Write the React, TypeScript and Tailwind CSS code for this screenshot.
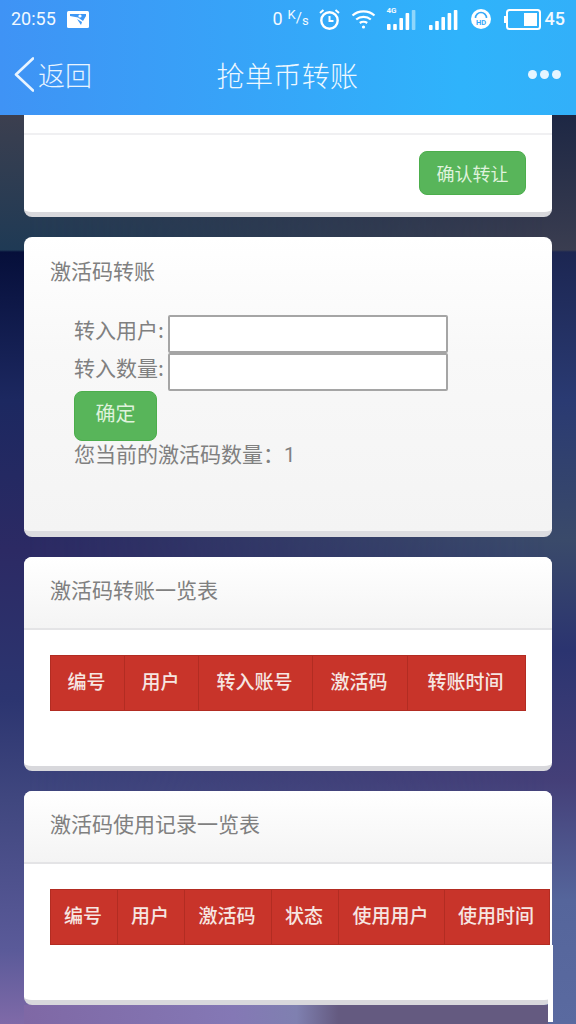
const cjk = 'font-["Noto_Sans_CJK_SC","Noto_Sans",sans-serif]';

function Signal({ bars, className }: { bars: number[]; className?: string }) {
  return (
    <svg width="30" height="22" viewBox="0 0 30 22" className={className}>
      {bars.map((h, i) => (
        <rect key={i} x={i * 6.2} y={22 - h} width="3.6" height={h} rx="0.8" fill={i === bars.length - 1 && bars[0] === 6 ? '#8fd6fb' : 'white'} />
      ))}
    </svg>
  );
}

function StatusBar() {
  return (
    <div className="flex h-9 items-center justify-between pl-[11px] pr-[11px] pt-0.5 font-['Roboto',sans-serif] text-[#f2f9ff]">
      <div className="flex items-center gap-[11px]">
        <span className="text-[18px] leading-none">20:55</span>
        <svg width="22" height="17" viewBox="0 0 22 17">
          <rect width="22" height="17" rx="1.5" fill="white" />
          <path d="M3 3h16v2l-3 5-5-3.5-8-1.5z" fill="#3f98f5" />
          <path d="M10 8l5 3-1 3z" fill="#3f98f5" />
          <circle cx="13" cy="5" r="1.6" fill="white" />
        </svg>
      </div>
      <div className="flex items-center">
        <span className="text-[18px] leading-none">0</span>
        <span className="ml-[5px] flex w-5 items-start text-[13px] leading-none">
          <span className="-mt-[3px]">K</span>
          <span className="text-[15px]">/</span>
          <span className="mt-[3px]">s</span>
        </span>
        <svg width="23" height="23" viewBox="0 0 23 23" fill="none" stroke="white" className="ml-[10px]">
          <circle cx="11.5" cy="12.5" r="8.2" strokeWidth="2.4" />
          <path d="M11.5 8v5h4" strokeWidth="2" />
          <path d="M2 5l3.5-3M21 5l-3.5-3" strokeWidth="2" />
        </svg>
        <svg width="25" height="20" viewBox="0 0 25 20" fill="none" stroke="white" strokeWidth="2.2" className="ml-[10px]">
          <path d="M1.5 6.5c6-5.5 16-5.5 22 0" />
          <path d="M5.2 10.5c4-3.5 10.6-3.5 14.6 0" />
          <path d="M8.8 14c2-1.5 5.4-1.5 7.4 0" />
          <circle cx="12.5" cy="18" r="1.6" fill="white" stroke="none" />
        </svg>
        <div className="relative ml-[11px] h-[22px] w-[30px]">
          <span className="absolute -top-[1px] left-0 text-[8px] leading-none font-bold">4G</span>
          <Signal bars={[6, 6, 12, 17, 20]} />
        </div>
        <Signal bars={[5, 9, 13, 17, 20]} className="ml-3" />
        <svg width="20" height="20" viewBox="0 0 20 20" className="ml-3">
          <circle cx="10" cy="10" r="10" fill="white" />
          <path d="M4.5 9a5.5 5.5 0 0 1 11 0" fill="none" stroke="#35a8f8" strokeWidth="1.6" />
          <text x="10" y="15.5" textAnchor="middle" fontSize="7.5" fontWeight="700" fill="#35a8f8">HD</text>
        </svg>
        <svg width="38" height="21" viewBox="0 0 38 21" fill="none" className="ml-[13px]">
          <rect x="3" y="1" width="33" height="19" rx="2.5" stroke="white" strokeWidth="2" />
          <rect x="0" y="7" width="2" height="7" fill="white" />
          <rect x="20" y="4" width="13" height="13" fill="white" />
        </svg>
        <span className="ml-[3px] text-[18px] leading-none font-medium">45</span>
      </div>
    </div>
  );
}

function Header() {
  return (
    <header className="relative z-10 flex h-[115px] shrink-0 flex-col bg-[linear-gradient(90deg,#3f93f5,#2fb3fb_80%,#32b0f9)] text-white">
      <StatusBar />
      <div className={`grid flex-1 grid-cols-[1fr_auto_1fr] items-center pb-[2px] pl-[14px] pr-[15px] ${cjk}`}>
        <div className="flex items-center gap-1">
          <svg width="20" height="35" viewBox="0 0 20 35" fill="none" stroke="#e8f4ff" strokeWidth="2.6" strokeLinecap="round" strokeLinejoin="round">
            <path d="M19 1.5L2 17.5 19 33.5" />
          </svg>
          <span className="text-[27px] leading-none font-light text-[#e8f4ff]">返回</span>
        </div>
        <h1 className="text-[28px] leading-none font-light tracking-[0.4px] text-[#eef8ff]">抢单币转账</h1>
        <div className="flex justify-end gap-[3px]">
          <i className="size-[9px] rounded-full bg-[#e6f5ff]" />
          <i className="size-[9px] rounded-full bg-[#e6f5ff]" />
          <i className="size-[9px] rounded-full bg-[#e6f5ff]" />
        </div>
      </div>
    </header>
  );
}

function Field({ label }: { label: string }) {
  return (
    <div className="flex h-[38px] items-center">
      <label className="w-[94px] pb-[10px] text-[21px] leading-none whitespace-nowrap text-[#808080]">{label}:</label>
      <input className="h-[38px] w-[280px] rounded-[2px] border-2 border-[#a5a5a5] bg-white" />
    </div>
  );
}

function TableCard({ title, cols, tableWidth, height }: { title: string; cols: { name: string; w: string }[]; tableWidth: string; height: string }) {
  return (
    <section className={`overflow-hidden rounded-lg border-b-[5px] border-[#d8d8dc] bg-white ${height}`}>
      <div className="flex h-[73px] items-center border-b-2 border-[#e4e4e6] bg-[linear-gradient(#ffffff,#f4f4f4)] pb-[5px] pl-[26px] text-[21px] text-[#808080]">
        {title}
      </div>
      <div className="pl-[26px] pt-[25px]">
        <table className={`table-fixed border-collapse ${tableWidth}`}>
          <tbody>
            <tr className="h-[55px] bg-[#c8342a] text-center text-[19px] font-medium text-[#f6e6e2]">
              {cols.map((c) => (
                <td key={c.name} className={`border border-[#b22c22] p-0 pb-1 pr-[2px] ${c.w}`}>{c.name}</td>
              ))}
            </tr>
          </tbody>
        </table>
      </div>
    </section>
  );
}

export default function App() {
  return (
    <div className={`relative flex h-[1024px] w-[576px] flex-col overflow-hidden bg-[linear-gradient(#3c3f4f_115px,#1f3a55_250px,#060f3a_252px,#1c2860_400px,#2c2a64_550px,#2c3570_700px,#40477f_800px,#5a5a99_950px,#7f6aa8_1024px)] ${cjk}`}>
      {/* wallpaper */}
      <div className="absolute inset-0 bg-[linear-gradient(#1d2744_115px,#3a3d50_250px,#1c2652_252px,#2a3a72_400px,#3a4a6a_540px,#2b3470_650px,#443f78_780px,#55659b_900px,#5a6aa0_1024px)] [mask-image:linear-gradient(to_right,transparent_5%,black_95%)]" />
      <div className="absolute bottom-0 left-6 right-[28px] h-[19px] bg-[linear-gradient(90deg,#7f68a5,#8478b5_40%,#7f80b0_52%,#645a80_60%)]" />

      <Header />

      <main className="relative flex flex-col gap-5 px-6">
        <section className="h-[102px] rounded-b-lg border-b-[5px] border-[#d8d8dc] bg-white">
          <div className="h-[20px] border-b-2 border-[#f0f0f2]" />
          <div className="flex justify-end pr-[26px] pt-4">
            <button className="h-[44px] w-[107px] rounded-lg border border-[#4cae4c] bg-[#58b55a] text-[18px] text-[#dff2dc]">确认转让</button>
          </div>
        </section>

        <section className="h-[300px] rounded-lg border-b-[6px] border-[#dcdce0] bg-[linear-gradient(#ffffff,#f8f8f8_40%,#f4f4f4)]">
          <h2 className="pl-[26px] pt-[18px] text-[21px] leading-[30px] text-[#808080]">激活码转账</h2>
          <div className="pl-[50px] pt-[30px]">
            <Field label="转入用户" />
            <Field label="转入数量" />
            <button className="block h-[50px] w-[83px] rounded-lg border border-[#4cae4c] bg-[#58b55a] pb-[7px] text-[20px] text-[#dff2dc]">确定</button>
            <p className="-mt-[2px] text-[21px] leading-[28px] text-[#808080]">
              您当前的激活码数量：<span className="font-['Roboto',sans-serif] text-[20px]">1</span>
            </p>
          </div>
        </section>

        <TableCard
          title="激活码转账一览表"
          height="h-[214px]"
          tableWidth="w-[475px]"
          cols={[
            { name: '编号', w: 'w-[74px]' },
            { name: '用户', w: 'w-[74px]' },
            { name: '转入账号', w: 'w-[114px]' },
            { name: '激活码', w: 'w-[95px]' },
            { name: '转账时间', w: 'w-[118px]' },
          ]}
        />

        <TableCard
          title="激活码使用记录一览表"
          height="h-[214px]"
          tableWidth="w-[499px]"
          cols={[
            { name: '编号', w: 'w-[67px]' },
            { name: '用户', w: 'w-[67px]' },
            { name: '激活码', w: 'w-[87px]' },
            { name: '状态', w: 'w-[67px]' },
            { name: '使用用户', w: 'w-[106px]' },
            { name: '使用时间', w: 'w-[105px]' },
          ]}
        />
      </main>

      <div className="absolute right-[23px] top-[945px] h-[77px] w-[5px] bg-white" />
    </div>
  );
}
